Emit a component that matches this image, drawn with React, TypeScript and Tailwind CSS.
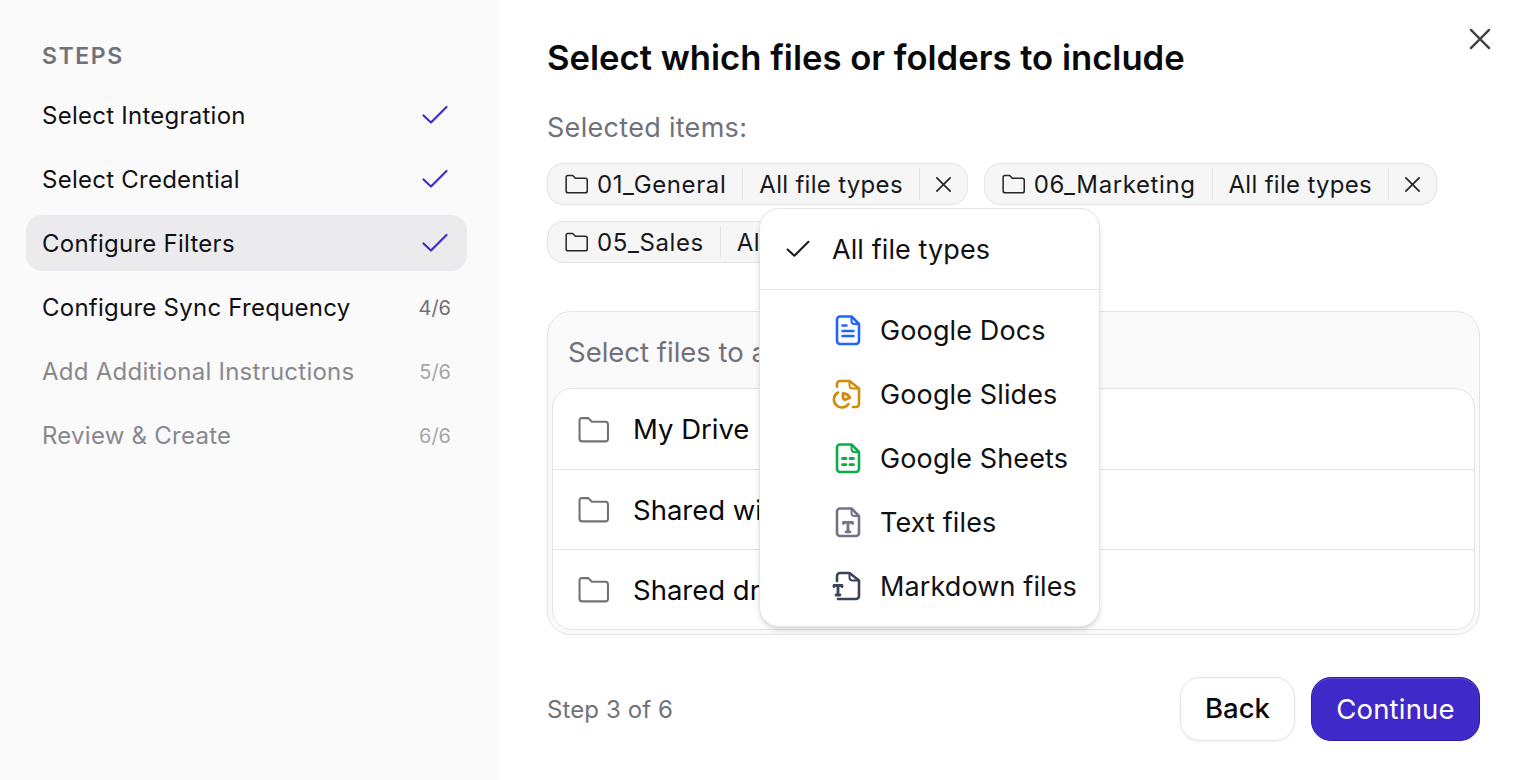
import React from "react";

const Check = ({ className }: { className: string }) => (
  <svg viewBox="0 0 28 22" fill="none" stroke="currentColor" strokeWidth="2.2" strokeLinecap="round" strokeLinejoin="round" className={className}>
    <path d="M2.500 11.500 10 18.500 25.500 3" />
  </svg>
);

const Folder = ({ className, sw = 2 }: { className: string; sw?: number }) => (
  <svg viewBox="0 0 30 26" fill="none" stroke="currentColor" strokeWidth={sw} strokeLinejoin="round" strokeLinecap="round" className={className}>
    <path d="M1.500 4a2 2 0 0 1 2-2h6.500l3.500 3.500h13a2.500 2.500 0 0 1 2.500 2.500v14a2.500 2.500 0 0 1-2.500 2.500H4a2.500 2.500 0 0 1-2.500-2.500V4Z" />
  </svg>
);

const X = ({ className }: { className: string }) => (
  <svg viewBox="0 0 20 20" fill="none" stroke="currentColor" strokeWidth="1.8" strokeLinecap="round" className={className}>
    <path d="M3 3l14 14M17 3 3 17" />
  </svg>
);

const FileBase = ({ children, color }: { children?: React.ReactNode; color: string }) => (
  <svg viewBox="0 0 28 32" fill="none" stroke={color} strokeWidth="2.600" strokeLinejoin="round" strokeLinecap="round" className="w-7 h-8">
    <path d="M6 2.500h11.500L25 10v17a3 3 0 0 1-3 3H6a3 3 0 0 1-3-3V5.500a3 3 0 0 1 3-3Z" />
    <path d="M17.500 3v4a3 3 0 0 0 3 3h4" strokeWidth="2" />
    {children}
  </svg>
);

const DocsIcon = () => (
  <FileBase color="#1f66ff">
    <path d="M8.500 11.500h4M8.500 17h11M8.500 22h11" />
  </FileBase>
);

const SlidesIcon = () => (
  <svg viewBox="0 0 30 32" fill="none" stroke="#d18a0a" strokeWidth="2.600" strokeLinejoin="round" strokeLinecap="round" className="w-[30px] h-8 -ml-[3px]">
    <path d="M6 8.700V6a3 3 0 0 1 3-3h9.500L28 10.500V26a3 3 0 0 1-3 3h-3" />
    <path d="M18.500 3.500v4a3 3 0 0 0 3 3h6" strokeWidth="2" />
    <path d="M7 14.500A8 8 0 1 0 17.500 26" />
    <path d="M12 15.500c3.500.3 6 2 6.800 4.300l-4.800 1.900a2.800 2.800 0 0 1-2-2.700Z" strokeWidth="2.800" />
  </svg>
);

const SheetsIcon = () => (
  <FileBase color="#0bab47">
    <path d="M8.500 16.500h3.500M16 16.500h3.500M8.500 22.700h3.500M16 22.700h3.500" strokeWidth="2.800" />
  </FileBase>
);

const TextIcon = () => (
  <FileBase color="#6f7486">
    <path d="M9.500 17.500v-1.200h9v1.200M14 16.300v9.500M12 25.800h4" strokeWidth="2.800" />
  </FileBase>
);

const MarkdownIcon = () => (
  <svg viewBox="0 0 30 32" fill="none" stroke="#3a4358" strokeWidth="2.600" strokeLinejoin="round" strokeLinecap="round" className="w-[30px] h-8 -ml-[3px]">
    <path d="M6 11V6a3 3 0 0 1 3-3h9.500L28 10.500V26a3 3 0 0 1-3 3H7" />
    <path d="M18.500 3.500v4a3 3 0 0 0 3 3h6" strokeWidth="2" />
    <path d="M3 16.700v-1.200h8v1.200M7 15.500v9.500M5 25h4" strokeWidth="2.800" />
  </svg>
);

const Step = ({ label, right, muted, active }: { label: string; right?: string; muted?: boolean; active?: boolean }) => (
  <div className={`h-14 rounded-[16px] flex items-center justify-between pl-4 pr-4 mb-2 ${active ? "bg-[#ebebed]" : ""}`}>
    <span className={`pt-[2px] text-[24px] font-normal tracking-[0.25px] ${muted ? "text-[#88888f]" : "text-[#111113]"}`}>{label}</span>
    {right ? (
      <span className={`pt-[2px] text-[20px] ${muted ? "text-[#a6a6ad]" : "text-[#6f6f78]"}`}>{right}</span>
    ) : (
      <Check className="w-7 h-[22px] mr-[2px] text-[#4329cf]" />
    )}
  </div>
);

const Chip = ({ name }: { name: string }) => (
  <div className="h-[42px] flex items-center rounded-[16px] border border-[#e4e4e7] bg-[#f6f6f7] text-[24px] font-normal tracking-[0.3px] text-[#18181b]">
    <div className="flex items-center h-[32px] pl-[17px] pr-[16px] gap-[9px] border-r border-[#e4e4e7]">
      <Folder className="w-[23px] h-5 text-[#27272a]" />
      <span className="pt-[2px] tracking-[0.6px]">{name}</span>
    </div>
    <div className="flex items-center h-[32px] pt-[2px] pl-[16px] pr-[16px] border-r border-[#e4e4e7]">All file types</div>
    <div className="flex items-center justify-center h-[32px] w-[47px]">
      <X className="w-[19px] h-[19px] text-[#27272a]" />
    </div>
  </div>
);

const Row = ({ label, heightClass }: { label: string; heightClass: string }) => (
  <div className={`flex items-center pl-[25px] gap-[24px] ${heightClass}`}>
    <Folder className="w-[31px] h-[27px] text-[#71717a]" />
    <span className="pt-[2px] text-[27.5px] font-normal text-[#09090b]">{label}</span>
  </div>
);

const MenuItem = ({ icon, label }: { icon: React.ReactNode; label: string }) => (
  <div className="h-16 flex items-center pl-[74px]">
    <div className="w-7 h-8 flex shrink-0">{icon}</div>
    <span className="ml-[18px] pt-[2px] text-[27px] tracking-[0.12px] text-[#111113]">{label}</span>
  </div>
);

export default function App() {
  return (
    <div className="w-[1524px] h-[780px] flex bg-white overflow-hidden font-['Inter',sans-serif]">
      <aside className="w-[499px] shrink-0 bg-[#fafafa] pt-[40px] pl-[26px] pr-8">
        <div className="pl-4 text-[23px] leading-[32px] font-semibold tracking-[1.6px] text-[#71717a] mb-[15px]">STEPS</div>
        <Step label="Select Integration" />
        <Step label="Select Credential" />
        <Step label="Configure Filters" active />
        <Step label="Configure Sync Frequency" right="4/6" />
        <Step label="Add Additional Instructions" right="5/6" muted />
        <Step label="Review & Create" right="6/6" muted />
      </aside>

      <main className="relative flex-1 flex flex-col pl-[48px] pr-[44px] pt-[34px]">
        <h1 className="text-[34.650px] leading-[46px] font-semibold text-[#09090b]">Select which files or folders to include</h1>
        <div className="mt-[28px] text-[27px] leading-[40px] tracking-[0.3px] text-[#71717a]">Selected items:</div>
        <div className="mt-[15px] flex flex-wrap gap-x-4 gap-y-4">
          <Chip name="01_General" />
          <Chip name="06_Marketing" />
          <Chip name="05_Sales" />
        </div>
        <div className="mt-[48px] h-[324px] rounded-[24px] border border-[#e4e4e7] bg-[#fafafa] px-1 pb-1 flex flex-col">
          <div className="h-[76px] flex items-center pt-[5px] pl-[16px] text-[27.500px] text-[#71717a]">Select files to add</div>
          <div className="flex-1 flex flex-col rounded-[20px] border border-[#e4e4e7] bg-white">
            <Row label="My Drive" heightClass="h-[81px] border-b border-[#e4e4e7]" />
            <Row label="Shared with me" heightClass="h-[80px] border-b border-[#e4e4e7]" />
            <Row label="Shared drives" heightClass="h-[79px]" />
          </div>
        </div>
        <div className="mt-[42px] flex items-center justify-between">
          <span className="pt-[2px] text-[24px] tracking-[0.1px] text-[#71717a]">Step 3 of 6</span>
          <div className="flex gap-4">
            <button className="w-[115px] h-16 rounded-[20px] border border-[#e4e4e7] bg-white text-[27.500px] font-[450] text-[#09090b] shadow-[0_1px_3px_rgba(0,0,0,0.06)]">Back</button>
            <button className="w-[169px] h-16 pt-[2px] rounded-[20px] border border-[#2c1ba8] bg-[#4029c9] text-[27.500px] font-normal tracking-[0.2px] text-white shadow-[inset_0_1px_0_rgba(255,255,255,0.16)]">Continue</button>
          </div>
        </div>

        <button className="absolute top-[26px] right-[31px] text-[#3f3f46]">
          <X className="w-[26px] h-[26px]" />
        </button>

        <div className="absolute left-[260px] top-[208px] w-[341px] h-[419px] rounded-[20px] border border-[#e4e4e7] bg-white shadow-[0_4px_6px_-1px_rgba(0,0,0,0.12),0_2px_4px_-2px_rgba(0,0,0,0.1)]">
          <div className="h-[81px] border-b border-[#e4e4e7] flex items-center pl-[25px]">
            <Check className="w-[26px] h-5 text-[#18181b]" />
            <span className="ml-[21px] pt-[2px] text-[27px] tracking-[0.1px] text-[#111113]">All file types</span>
          </div>
          <div className="pt-[8px]">
            <MenuItem icon={<DocsIcon />} label="Google Docs" />
            <MenuItem icon={<SlidesIcon />} label="Google Slides" />
            <MenuItem icon={<SheetsIcon />} label="Google Sheets" />
            <MenuItem icon={<TextIcon />} label="Text files" />
            <MenuItem icon={<MarkdownIcon />} label="Markdown files" />
          </div>
        </div>
      </main>
    </div>
  );
}
